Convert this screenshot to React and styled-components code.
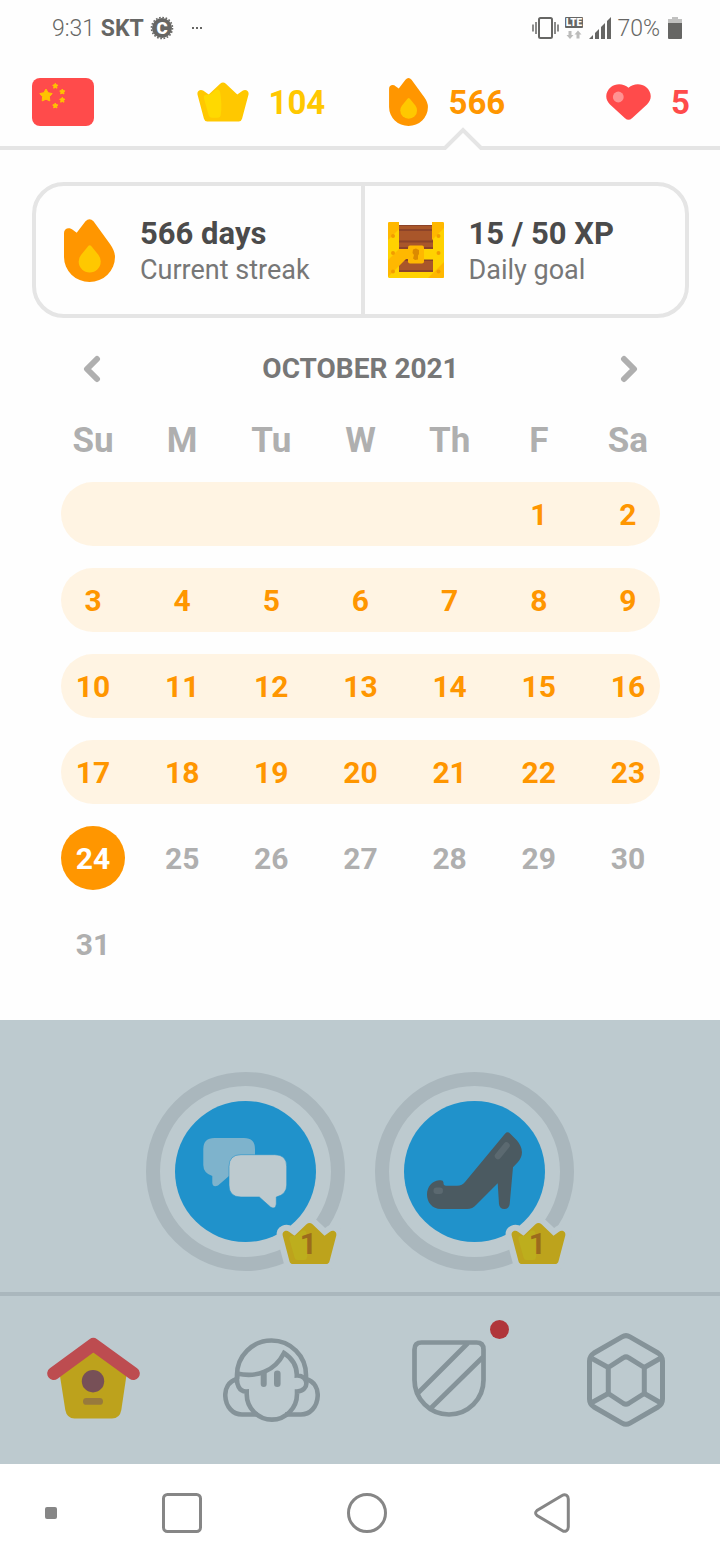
import React, { useState } from 'react'
import styled, { createGlobalStyle } from 'styled-components'

const weekDays = ['Su', 'M', 'Tu', 'W', 'Th', 'F', 'Sa']

const weeks = [
  [null, null, null, null, null, 1, 2],
  [3, 4, 5, 6, 7, 8, 9],
  [10, 11, 12, 13, 14, 15, 16],
  [17, 18, 19, 20, 21, 22, 23],
  [24, 25, 26, 27, 28, 29, 30],
  [31, null, null, null, null, null, null],
]

const TODAY = 24

const starPoints = (cx, cy, r) =>
  Array.from({ length: 10 }, (_, i) => {
    const radius = i % 2 ? r * 0.55 : r
    const angle = (Math.PI / 5) * i - Math.PI / 2
    return `${(cx + radius * Math.cos(angle)).toFixed(1)},${(cy + radius * Math.sin(angle)).toFixed(1)}`
  }).join(' ')

const crownShape =
  'M.2 13C-.5 8.5 4 7.3 6.5 9.3L12 13.2L24 1.8Q27-.8 30 1.8L42 13.2L47.5 9.3C50 7.3 54.5 8.5 53.8 13L47 38.7Q46.3 41.5 43.5 41.5H10.5Q7.7 41.5 7 38.7Z'
const crownShine =
  'M7 17Q6.2 14 9 13.6Q14 13.5 16 11L19 8.5Q23 6.5 24 10.5Q26.2 24 24.6 35Q24.2 37.5 21.6 37.5H15Q12.5 37.5 12 35Z'

/* ICONS */
const FlagIcon = () => (
  <svg width="62" height="48" viewBox="0 0 62 48" aria-hidden="true">
    <rect width="62" height="48" rx="8" fill="#ff4b4b" />
    <g fill="#ffc200" stroke="#ffc200" strokeLinejoin="round">
      <polygon points={starPoints(14, 17.6, 6.5)} />
      <polygon points={starPoints(23.3, 8, 2.7)} />
      <polygon points={starPoints(30.3, 13.7, 2.7)} />
      <polygon points={starPoints(30.3, 22, 2.7)} />
      <polygon points={starPoints(23.3, 27.7, 2.7)} />
    </g>
  </svg>
)

const CrownIcon = () => (
  <svg width="52" height="40" viewBox="0 0 54 42" aria-hidden="true">
    <path d={crownShape} fill="#ffc800" />
    <path d={crownShine} fill="#ffd900" />
  </svg>
)

const FlameIcon = ({ width, height }) => (
  <svg width={width} height={height} viewBox="0 0 51 63" aria-hidden="true">
    <path
      d="M0 14C0 9 5.500 8 9 11L12.700 13.800L21.500 2.300Q25.500-2 29.500 2.300L46 25Q51 32 51 38A25.500 25 0 0 1 0 38Z"
      fill="#ff9600"
    />
    <path
      d="M24.500 26.800Q25.700 25.600 27 26.800L34.500 36Q36.700 39 36.700 42.500A11 11 0 0 1 14.700 42.500Q14.700 39 17 36Z"
      fill="#ffc800"
    />
  </svg>
)

const HeartIcon = () => (
  <svg width="45" height="36" viewBox="0 0 45 36" aria-hidden="true">
    <path
      d="M22.500 3.800C27-.6 35-1.200 40 3C46 8 46.300 15.500 41 20.500L26 34.300Q22.500 37.300 19 34.300L4 20.500C-1.300 15.500-1 8 5 3C10-1.200 18-.6 22.500 3.800Z"
      fill="#ff4b4b"
    />
    <circle cx="12.300" cy="13" r="5.400" fill="#ff9393" />
  </svg>
)

const ChestIcon = () => (
  <svg width="56" height="56" viewBox="0 0 56 56" aria-hidden="true">
    <rect x="10" y="3" width="36" height="48" fill="#a9562a" />
    <path d="M11 3H45V4H11ZM11 7H45V9H11ZM11 18.500H45V20.500H11ZM11 25H45V27H11ZM11 37H45V39H11ZM11 48H45V50H11Z" fill="#8c4329" />
    <path d="M1.500 0H11V50H45V0H54.500Q56 0 56 1.500V54.500Q56 56 54.500 56H1.500Q0 56 0 54.500V1.500Q0 0 1.500 0Z" fill="#ffd200" />
    <path d="M44 0V18L56 6V1.500Q56 0 54.500 0ZM1.500 0H11V7L0 18V1.500Q0 0 1.500 0ZM0 38L11 27H22V37H18L0 55ZM56 40V54.500Q56 56 54.500 56H40Z" fill="#ffb800" />
    <rect x="34" y="27" width="12" height="10.500" fill="#ffd200" />
    <rect x="20" y="23.500" width="16" height="18" rx="2" fill="#ffb800" />
    <path d="M25 27.500L28 26.500L31 28V32L30 33.500V37.500L27 38L25 36.500L26 33L24.500 31Z" fill="#dc8a00" />
    <g fill="#f29c00">
      <circle cx="5" cy="14" r="2" />
      <circle cx="5" cy="31" r="2" />
      <circle cx="5" cy="49.500" r="2" />
      <circle cx="50.500" cy="14" r="2" />
      <circle cx="50.500" cy="31" r="2" />
      <circle cx="50.500" cy="49.500" r="2" />
    </g>
  </svg>
)

const Chevron = ({ d }) => (
  <svg width="18" height="28" viewBox="0 0 18 28" aria-hidden="true">
    <path d={d} fill="none" stroke="#afafaf" strokeWidth="6" strokeLinecap="round" strokeLinejoin="round" />
  </svg>
)

const SkillRing = ({ children }) => (
  <svg width="199" height="199" viewBox="0 0 199 199" aria-hidden="true">
    <circle cx="99.500" cy="99.500" r="92.500" fill="none" stroke="#aab7bd" strokeWidth="14" />
    <circle cx="99.500" cy="99.500" r="70.500" fill="#2092cb" />
    {children}
    <g transform="translate(136.500 150.500)">
      <path d={crownShape} fill="#bdcacf" stroke="#bdcacf" strokeWidth="12" strokeLinejoin="round" />
      <path d={crownShape} fill="#bda31c" />
      <path d={crownShine} fill="#bdae1d" />
    </g>
  </svg>
)

const ChatDrawing = () => (
  <>
    <path
      d="M68.500 66H98Q109 66 109 77V104H83L72 113.500Q67 116 66.300 111V104Q57.300 101 57.300 93V77Q57.300 66 68.500 66Z"
      fill="#7eb3cc"
    />
    <path
      d="M95 82.700H128.700Q140.700 82.700 140.700 94.700V113Q140.700 122.500 130.300 125V132Q129.500 138 124.500 135L113.300 125H95Q83 125 83 113V94.700Q83 82.700 95 82.700Z"
      fill="#bdcacf"
      stroke="#2092cb"
      strokeWidth=".6"
    />
  </>
)

const ShoeDrawing = () => (
  <>
    <path
      d="M64 108.300Q68.300 107.500 68.500 110.500Q68.300 113.700 71 113.700H82Q87.500 113.500 90 110L130 61.700Q132.700 59 135.300 61.700L142 68.500Q151.500 80 142.800 90.300L138 95.300L134.700 132Q134 137 129.300 137Q124.600 137 124 132L122.700 111.300L101.500 132.500Q97.500 137 92 137H66C57 137 52 130 52 122.500C52 115 57 109 64 108.300Z"
      fill="#4b5a61"
    />
    <rect x="58.500" y="115.500" width="9.500" height="6.500" rx="3.200" fill="#5b6970" />
    <path d="M123 84L131.500 73.500" stroke="#5b6970" strokeWidth="6.500" strokeLinecap="round" />
  </>
)

const HomeIcon = () => (
  <svg width="93" height="86" viewBox="0 0 93 86" aria-hidden="true">
    <path d="M12.500 36L46 12L79.800 36L74.300 73Q72.800 81.500 65 81.500H27.500Q20 81.500 18.300 73Z" fill="#bda21c" />
    <path d="M6.700 36.500L46.300 7.500L86.300 36.500" fill="none" stroke="#bd4c50" strokeWidth="13" strokeLinecap="round" strokeLinejoin="round" />
    <circle cx="46" cy="44.200" r="11.200" fill="#775057" />
    <rect x="36" y="61" width="20" height="6.800" rx="3.400" fill="#987a3c" />
  </svg>
)

const ProfileIcon = () => (
  <svg width="97" height="84" viewBox="0 0 97 84" aria-hidden="true">
    <g fill="none" stroke="#859399" strokeWidth="4.600">
      <path d="M14 41V37A34.500 34.500 0 0 1 83 37V41" />
      <path d="M14 35.500C34 40 52 33 61 15C70 21 74 29 73.800 37.500C86 37 87 53 74 53.500V56A25 25.500 0 0 1 23.700 56V53.500C16 54 13 46 14.300 38" />
      <path d="M14 41C5 43.500 2 51 2.300 58C2.800 69 10 76.500 19 76.500H35" />
      <path d="M83 41C92 43.500 95 51 94.700 58C94.200 69 87 76.500 78 76.500H62" />
    </g>
    <path d="M37.700 35L43.700 33V46A3 3 0 0 1 37.700 46Z" fill="#859399" />
    <rect x="51" y="32.500" width="6.600" height="16.600" rx="3.300" fill="#859399" />
  </svg>
)

const ShieldIcon = () => (
  <svg width="74" height="80" viewBox="0 0 74 80" aria-hidden="true">
    <g fill="none" stroke="#859399" strokeWidth="4.700">
      <path d="M2.500 40V9.500Q2.500 2.500 9.500 2.500H64.500Q71.500 2.500 71.500 9.500V40A34.500 34.500 0 0 1 2.500 40Z" />
      <path d="M56 3L6 53M71 17L18.500 68.500" />
    </g>
  </svg>
)

const GemIcon = () => (
  <svg width="78" height="94" viewBox="0 0 78 94" aria-hidden="true">
    <g fill="none" stroke="#859399" strokeWidth="5" strokeLinejoin="round">
      <path d="M35 3.800Q39 1.500 43 3.800L71 20Q75.500 23 75.500 28V66Q75.500 71 71 74L43 90.200Q39 92.500 35 90.200L7 74Q2.500 71 2.500 66V28Q2.500 23 7 20Z" />
      <path d="M36.500 24.700Q39 23 41.500 24.700L57.300 34.500V60.500L41.500 70.500Q39 72 36.500 70.500L21.300 60.500V34.500Z" />
      <path d="M5 25.500L21.300 34.500M73 25.500L57.300 34.500M5 69.500L21.300 60.500M73 69.500L57.300 60.500" />
    </g>
  </svg>
)

const CarrierBadge = () => (
  <svg width="24" height="24" viewBox="0 0 24 24" aria-hidden="true">
    <circle cx="12" cy="12" r="10" fill="#666664" />
    <circle cx="12" cy="12" r="10.500" fill="none" stroke="#666664" strokeWidth="1.600" strokeDasharray="1.650 1.650" />
    <text x="12" y="18" textAnchor="middle" fontFamily="Roboto, sans-serif" fontSize="17" fontWeight="900" fill="#fff">C</text>
  </svg>
)

const VibrateIcon = () => (
  <svg width="27" height="22" viewBox="0 0 27 22" aria-hidden="true">
    <g fill="none" stroke="#666664">
      <rect x="7" y="1" width="13" height="20" rx="1.500" strokeWidth="2" />
      <path d="M4 5V17M23 5V17M1 7.500V14.500M26 7.500V14.500" strokeWidth="1.500" />
    </g>
  </svg>
)

const LteIcon = () => (
  <svg width="18" height="22" viewBox="0 0 18 22" aria-hidden="true">
    <rect width="18" height="11" rx="1" fill="#666664" />
    <text x="9" y="9" textAnchor="middle" fontFamily="Roboto, sans-serif" fontSize="10" fontWeight="900" fill="#fff">LTE</text>
    <path d="M3.500 14H6.500V18H8.500L5 22L1.500 18H3.500ZM11.500 21.500H14.500V17.500H16.500L13 13.500L9.500 17.500H11.500Z" fill="#bcbcbb" />
  </svg>
)

const SignalIcon = () => (
  <svg width="22" height="22" viewBox="0 0 22 22" aria-hidden="true">
    <path d="M0 22L4 18V22ZM6 16L10 12V22H6ZM12 10L16 6V22H12ZM18 4L22 0V22H18Z" fill="#666664" />
  </svg>
)

const BatteryIcon = () => (
  <svg width="14" height="22" viewBox="0 0 14 22" aria-hidden="true">
    <path d="M4 0H10V2H14V7H0V2H4Z" fill="#c1c1c0" />
    <path d="M0 6H14V21Q14 22 13 22H1Q0 22 0 21Z" fill="#666664" />
  </svg>
)

const App = () => {
  const [tab, setTab] = useState('home')

  return (
    <>
      <GlobalStyle />
      <Screen>
        {/* STATUS BAR */}
        <StatusBar>
          <StatusGroup>
            <span>9:31 <b>SKT</b></span>
            <CarrierBadge />
            <MoreDots>
              <i /><i /><i />
            </MoreDots>
          </StatusGroup>
          <StatusGroup>
            <VibrateIcon />
            <LteIcon />
            <SignalIcon />
            <span>70%</span>
            <Battery><BatteryIcon /></Battery>
          </StatusGroup>
        </StatusBar>

        {/* HEADER */}
        <StatsBar>
          <Stat aria-label="Chinese course"><FlagIcon /></Stat>
          <Stat $color="#ffc800"><CrownIcon />104</Stat>
          <Stat $color="#ff9600" $align="center">
            <FlameIcon width={39} height={48} />566
            <Caret width="40" height="24" viewBox="0 0 40 24" aria-hidden="true">
              <path d="M0 24L20 4L40 24Z" fill="#fefefe" />
              <path d="M0 22H2L20 4L38 22H40" fill="none" stroke="#e5e5e5" strokeWidth="4" />
            </Caret>
          </Stat>
          <Stat $color="#ff4b4b" $align="flex-end"><HeartIcon />5</Stat>
        </StatsBar>

        <Sheet>
          <Summary>
            <SummaryItem>
              <FlameIcon width={51} height={63} />
              <SummaryText>
                <SummaryValue>566 days</SummaryValue>
                <SummaryLabel>Current streak</SummaryLabel>
              </SummaryText>
            </SummaryItem>
            <SummaryItem>
              <ChestIcon />
              <SummaryText>
                <SummaryValue>15 / 50 XP</SummaryValue>
                <SummaryLabel>Daily goal</SummaryLabel>
              </SummaryText>
            </SummaryItem>
          </Summary>

          {/* CALENDAR */}
          <MonthBar>
            <MonthButton aria-label="Previous month"><Chevron d="M14 4L4 14L14 24" /></MonthButton>
            <MonthTitle>OCTOBER 2021</MonthTitle>
            <MonthButton aria-label="Next month"><Chevron d="M4 4L14 14L4 24" /></MonthButton>
          </MonthBar>

          <Calendar>
            <thead>
              <WeekRow>
                {weekDays.map((day) => <WeekDay key={day} scope="col">{day}</WeekDay>)}
              </WeekRow>
            </thead>
            <tbody>
              {weeks.map((week, i) => (
                <WeekRow key={i} $streak={i < 4}>
                  {week.map((day, j) => (
                    <Day key={j} $done={day < TODAY} $today={day === TODAY}>{day}</Day>
                  ))}
                </WeekRow>
              ))}
            </tbody>
          </Calendar>
        </Sheet>

        {/* LESSONS */}
        <Lessons>
          <Skill aria-label="Conversation">
            <SkillRing><ChatDrawing /></SkillRing>
            <Level>1</Level>
          </Skill>
          <Skill aria-label="Clothes">
            <SkillRing><ShoeDrawing /></SkillRing>
            <Level>1</Level>
          </Skill>
        </Lessons>

        <TabBar>
          <Tab aria-label="Home" aria-pressed={tab === 'home'} onClick={() => setTab('home')}><HomeIcon /></Tab>
          <Tab aria-label="Profile" aria-pressed={tab === 'profile'} onClick={() => setTab('profile')}><ProfileIcon /></Tab>
          <Tab aria-label="Leagues" aria-pressed={tab === 'leagues'} onClick={() => setTab('leagues')}>
            <TabIcon>
              <ShieldIcon />
              <Dot />
            </TabIcon>
          </Tab>
          <Tab aria-label="Shop" aria-pressed={tab === 'shop'} onClick={() => setTab('shop')}><GemIcon /></Tab>
        </TabBar>

        <SystemNav>
          <SystemButton aria-label="Hide bar">
            <svg width="12" height="12" viewBox="0 0 12 12"><rect width="12" height="12" rx="2" fill="#868686" /></svg>
          </SystemButton>
          <SystemButton aria-label="Recent apps">
            <svg width="40" height="40" viewBox="0 0 40 40">
              <rect x="1.500" y="1.500" width="37" height="37" rx="4" fill="none" stroke="#868686" strokeWidth="3" />
            </svg>
          </SystemButton>
          <SystemButton aria-label="Home screen">
            <svg width="40" height="40" viewBox="0 0 40 40">
              <circle cx="20" cy="20" r="18.500" fill="none" stroke="#868686" strokeWidth="3" />
            </svg>
          </SystemButton>
          <SystemButton aria-label="Back">
            <svg width="36" height="40" viewBox="0 0 36 40">
              <path
                d="M28.500 2.300Q30.500 1 32.500 2.300Q34.300 3.500 34.300 6V34Q34.300 36.500 32.500 37.700Q30.500 39 28.500 37.700L3 22.500Q.2 20 3 17.500Z"
                fill="none"
                stroke="#868686"
                strokeWidth="3"
              />
            </svg>
          </SystemButton>
        </SystemNav>
      </Screen>
    </>
  )
}

export default App

const GlobalStyle = createGlobalStyle`
  * {
    box-sizing: border-box;
  }
  body {
    margin: 0;
    background: #fefefe;
    font-family: Roboto, "Liberation Sans", sans-serif;
  }
  button {
    padding: 0;
    border: 0;
    background: none;
    font: inherit;
    color: inherit;
    cursor: pointer;
  }
  svg {
    display: block;
    flex-shrink: 0;
  }
`

const Screen = styled.div`
  display: flex;
  flex-direction: column;
  min-height: 100vh;
`

const StatusBar = styled.div`
  display: flex;
  justify-content: space-between;
  height: 56px;
  padding: 0 38px 0 52px;
  color: #666664;
  font-size: 23px;
  font-weight: 300;

  b {
    font-weight: 700;
  }
`

const StatusGroup = styled.div`
  display: flex;
  align-items: center;
  gap: 6px;
`

const MoreDots = styled.span`
  display: flex;
  gap: 2px;
  margin-left: 12px;

  i {
    width: 2px;
    height: 2px;
    background: #666664;
  }
`

const Battery = styled.span`
  margin-left: 2px;
`

const StatsBar = styled.header`
  display: grid;
  grid-template-columns: 1fr 1fr 1.05fr 0.95fr;
  height: 94px;
  padding: 2px 30px 0 32px;
  border-bottom: 4px solid #e5e5e5;
`

const Stat = styled.button`
  position: relative;
  display: flex;
  align-items: center;
  justify-self: ${({ $align }) => $align || 'flex-start'};
  gap: 20px;
  color: ${({ $color }) => $color};
  font-size: 33px;
  font-weight: 700;
`

const Caret = styled.svg`
  position: absolute;
  left: 54px;
  bottom: -4px;
`

const Sheet = styled.main`
  padding: 32px 31px 22px 32px;
`

const Summary = styled.section`
  display: grid;
  grid-template-columns: 1fr 1fr;
  border: 4px solid #e5e5e5;
  border-radius: 32px;
`

const SummaryItem = styled.div`
  display: flex;
  align-items: center;
  gap: 25px;
  height: 128px;
  padding: 0 24px 0 28px;

  & + & {
    padding-left: 23px;
    border-left: 4px solid #e5e5e5;
  }
`

const SummaryText = styled.div`
  padding-top: 4px;
`

const SummaryValue = styled.div`
  color: #4b4b4b;
  font-size: 31px;
  font-weight: 700;
  line-height: 36px;
`

const SummaryLabel = styled.div`
  color: #777;
  font-size: 27px;
  line-height: 36px;
`

const MonthBar = styled.div`
  display: flex;
  align-items: center;
  justify-content: space-between;
  height: 64px;
  margin-top: 18px;
  padding: 0 28px;
`

const MonthButton = styled.button`
  display: grid;
  place-items: center;
  width: 64px;
  height: 64px;
  padding-top: 2px;
`

const MonthTitle = styled.h2`
  margin: 0;
  color: #777;
  font-size: 28px;
  font-weight: 700;
`

const Calendar = styled.table`
  display: block;
  margin: 8px 29px 0;

  thead,
  tbody {
    display: block;
  }
`

const WeekRow = styled.tr`
  display: flex;
  justify-content: space-between;
  margin-bottom: 22px;
  border-radius: 32px;
  background: ${({ $streak }) => ($streak ? '#fff4e3' : 'transparent')};

  thead & {
    margin-bottom: 10px;
  }
`

const WeekDay = styled.th`
  width: 64px;
  padding: 2px 0 0;
  color: #afafaf;
  font-size: 35px;
  font-weight: 700;
  line-height: 62px;
  text-align: center;
`

const Day = styled.td`
  width: 64px;
  height: 64px;
  padding: 2px 0 0;
  border-radius: 50%;
  background: ${({ $today }) => ($today ? '#ff9600' : 'transparent')};
  color: ${({ $done, $today }) => ($today ? '#fff' : $done ? '#ff9600' : '#afafaf')};
  font-size: 30px;
  font-weight: 700;
  line-height: 62px;
  text-align: center;
`

const Lessons = styled.section`
  display: flex;
  flex: 1;
  align-items: flex-start;
  justify-content: center;
  gap: 30px;
  padding: 52px 0 21px;
  background: #bdcacf;
`

const Skill = styled.button`
  position: relative;
`

const Level = styled.span`
  position: absolute;
  right: 28px;
  bottom: 12px;
  color: #9c6b1c;
  font-size: 30px;
  font-weight: 700;
  line-height: 30px;
`

const TabBar = styled.nav`
  display: grid;
  grid-template-columns: repeat(4, 1fr);
  height: 172px;
  padding: 0 5px;
  border-top: 4px solid #aab7bd;
  background: #bdcacf;
`

const Tab = styled.button`
  display: grid;
  place-items: center;
`

const TabIcon = styled.span`
  position: relative;
`

const Dot = styled.span`
  position: absolute;
  top: -20px;
  right: -23px;
  width: 19px;
  height: 19px;
  border-radius: 50%;
  background: #b0353a;
`

const SystemNav = styled.nav`
  display: grid;
  grid-template-columns: 78px 1fr 1fr 1fr;
  height: 96px;
  padding: 1px 76px 0 12px;
  background: #fff;
`

const SystemButton = styled.button`
  display: grid;
  place-items: center;
`
